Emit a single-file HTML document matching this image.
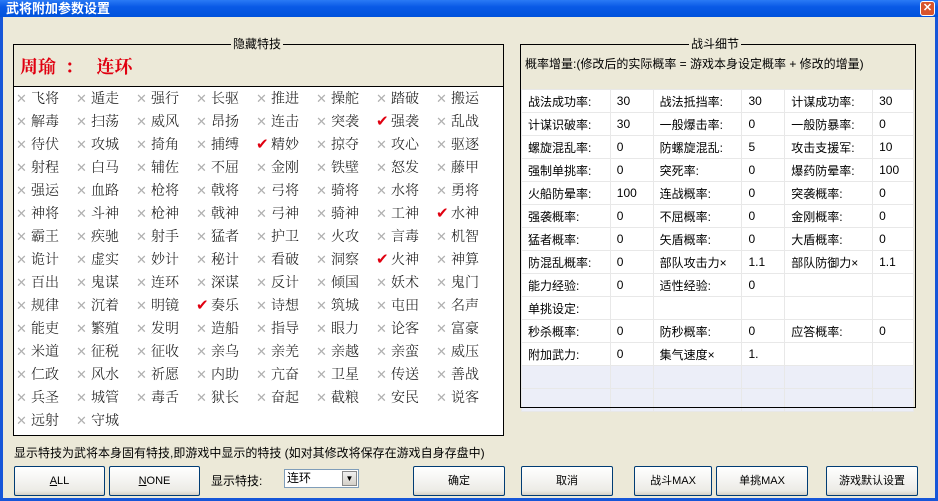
<!DOCTYPE html>
<html><head><meta charset="utf-8"><style>
*{margin:0;padding:0;box-sizing:border-box}
body{width:938px;height:501px;overflow:hidden;background:#ece9d8;font-family:"Liberation Sans","Noto Sans CJK SC",sans-serif;font-size:12px;color:#000;position:relative}
.title{position:absolute;left:0;top:0;width:938px;height:17px;background:linear-gradient(#2a7af5,#0a5ae6 40%,#0052dc);color:#fff;font-weight:bold;font-size:13px;line-height:17px;padding-left:6px}
.close{position:absolute;right:3px;top:1px;width:15px;height:15px;background:#d8542c;border:1px solid #fff;border-radius:3px;color:#fff;font-size:11px;line-height:13px;text-align:center;font-weight:bold}
.bl{position:absolute;left:0;top:17px;width:3px;height:484px;background:#1656d8}
.br{position:absolute;right:0;top:17px;width:3px;height:484px;background:#1656d8}
.bb{position:absolute;left:0;bottom:0;width:938px;height:3px;background:#1656d8}
.box{position:absolute;border:1px solid #000;z-index:2}
.cap{position:absolute;background:#ece9d8;padding:0 2px;font-size:12px;line-height:14px;z-index:3}
.grid{position:absolute;left:14px;top:86px;width:489px;height:349px;background:#fff;border-top:1px solid #000}
.it{position:absolute;width:60px;height:23px;font-family:"Noto Serif CJK SC",serif;font-weight:300;font-size:14px;line-height:23px;white-space:nowrap;color:#111}
.x{display:inline-block;width:15px;color:#b0b0b0;font-family:"DejaVu Sans",sans-serif;font-size:13px;font-weight:bold}
.c{display:inline-block;width:15px;color:#e00010;font-family:"DejaVu Sans",sans-serif;font-size:15px}
table{position:absolute;left:521px;top:89px;width:393px;border-collapse:collapse;background:#fff}
td{height:23px;border:1px solid #e8e8e8;padding-left:6px;font-size:12px;white-space:nowrap}
tr.e td{background:#eceef8}
.btn{position:absolute;top:466px;height:30px;border:1px solid #003c74;border-radius:2px;background:linear-gradient(#fff,#ecebe6 85%,#d6d0c5);font-size:11px;text-align:center;line-height:28px}
</style></head><body>
<div class="title">武将附加参数设置</div><div class="close">✕</div>
<div class="bl"></div><div class="br"></div><div class="bb"></div>

<div class="box" style="left:13px;top:44px;width:491px;height:392px"></div>
<div class="cap" style="left:231px;top:37px">隐藏特技</div>
<div style="position:absolute;left:20px;top:54px;color:#e00010;font-family:'Noto Serif CJK SC',serif;font-weight:bold;font-size:18px;line-height:24px">周瑜&nbsp;&nbsp;：&nbsp;&nbsp;&nbsp;连环</div>
<div class="grid">
<div class="it" style="left:2px;top:0px"><span class="x">✕</span>飞将</div><div class="it" style="left:62px;top:0px"><span class="x">✕</span>遁走</div><div class="it" style="left:122px;top:0px"><span class="x">✕</span>强行</div><div class="it" style="left:182px;top:0px"><span class="x">✕</span>长驱</div><div class="it" style="left:242px;top:0px"><span class="x">✕</span>推进</div><div class="it" style="left:302px;top:0px"><span class="x">✕</span>操舵</div><div class="it" style="left:362px;top:0px"><span class="x">✕</span>踏破</div><div class="it" style="left:422px;top:0px"><span class="x">✕</span>搬运</div>
<div class="it" style="left:2px;top:23px"><span class="x">✕</span>解毒</div><div class="it" style="left:62px;top:23px"><span class="x">✕</span>扫荡</div><div class="it" style="left:122px;top:23px"><span class="x">✕</span>威风</div><div class="it" style="left:182px;top:23px"><span class="x">✕</span>昂扬</div><div class="it" style="left:242px;top:23px"><span class="x">✕</span>连击</div><div class="it" style="left:302px;top:23px"><span class="x">✕</span>突袭</div><div class="it" style="left:362px;top:23px"><span class="c">✔</span>强袭</div><div class="it" style="left:422px;top:23px"><span class="x">✕</span>乱战</div>
<div class="it" style="left:2px;top:46px"><span class="x">✕</span>待伏</div><div class="it" style="left:62px;top:46px"><span class="x">✕</span>攻城</div><div class="it" style="left:122px;top:46px"><span class="x">✕</span>掎角</div><div class="it" style="left:182px;top:46px"><span class="x">✕</span>捕缚</div><div class="it" style="left:242px;top:46px"><span class="c">✔</span>精妙</div><div class="it" style="left:302px;top:46px"><span class="x">✕</span>掠夺</div><div class="it" style="left:362px;top:46px"><span class="x">✕</span>攻心</div><div class="it" style="left:422px;top:46px"><span class="x">✕</span>驱逐</div>
<div class="it" style="left:2px;top:69px"><span class="x">✕</span>射程</div><div class="it" style="left:62px;top:69px"><span class="x">✕</span>白马</div><div class="it" style="left:122px;top:69px"><span class="x">✕</span>辅佐</div><div class="it" style="left:182px;top:69px"><span class="x">✕</span>不屈</div><div class="it" style="left:242px;top:69px"><span class="x">✕</span>金刚</div><div class="it" style="left:302px;top:69px"><span class="x">✕</span>铁壁</div><div class="it" style="left:362px;top:69px"><span class="x">✕</span>怒发</div><div class="it" style="left:422px;top:69px"><span class="x">✕</span>藤甲</div>
<div class="it" style="left:2px;top:92px"><span class="x">✕</span>强运</div><div class="it" style="left:62px;top:92px"><span class="x">✕</span>血路</div><div class="it" style="left:122px;top:92px"><span class="x">✕</span>枪将</div><div class="it" style="left:182px;top:92px"><span class="x">✕</span>戟将</div><div class="it" style="left:242px;top:92px"><span class="x">✕</span>弓将</div><div class="it" style="left:302px;top:92px"><span class="x">✕</span>骑将</div><div class="it" style="left:362px;top:92px"><span class="x">✕</span>水将</div><div class="it" style="left:422px;top:92px"><span class="x">✕</span>勇将</div>
<div class="it" style="left:2px;top:115px"><span class="x">✕</span>神将</div><div class="it" style="left:62px;top:115px"><span class="x">✕</span>斗神</div><div class="it" style="left:122px;top:115px"><span class="x">✕</span>枪神</div><div class="it" style="left:182px;top:115px"><span class="x">✕</span>戟神</div><div class="it" style="left:242px;top:115px"><span class="x">✕</span>弓神</div><div class="it" style="left:302px;top:115px"><span class="x">✕</span>骑神</div><div class="it" style="left:362px;top:115px"><span class="x">✕</span>工神</div><div class="it" style="left:422px;top:115px"><span class="c">✔</span>水神</div>
<div class="it" style="left:2px;top:138px"><span class="x">✕</span>霸王</div><div class="it" style="left:62px;top:138px"><span class="x">✕</span>疾驰</div><div class="it" style="left:122px;top:138px"><span class="x">✕</span>射手</div><div class="it" style="left:182px;top:138px"><span class="x">✕</span>猛者</div><div class="it" style="left:242px;top:138px"><span class="x">✕</span>护卫</div><div class="it" style="left:302px;top:138px"><span class="x">✕</span>火攻</div><div class="it" style="left:362px;top:138px"><span class="x">✕</span>言毒</div><div class="it" style="left:422px;top:138px"><span class="x">✕</span>机智</div>
<div class="it" style="left:2px;top:161px"><span class="x">✕</span>诡计</div><div class="it" style="left:62px;top:161px"><span class="x">✕</span>虚实</div><div class="it" style="left:122px;top:161px"><span class="x">✕</span>妙计</div><div class="it" style="left:182px;top:161px"><span class="x">✕</span>秘计</div><div class="it" style="left:242px;top:161px"><span class="x">✕</span>看破</div><div class="it" style="left:302px;top:161px"><span class="x">✕</span>洞察</div><div class="it" style="left:362px;top:161px"><span class="c">✔</span>火神</div><div class="it" style="left:422px;top:161px"><span class="x">✕</span>神算</div>
<div class="it" style="left:2px;top:184px"><span class="x">✕</span>百出</div><div class="it" style="left:62px;top:184px"><span class="x">✕</span>鬼谋</div><div class="it" style="left:122px;top:184px"><span class="x">✕</span>连环</div><div class="it" style="left:182px;top:184px"><span class="x">✕</span>深谋</div><div class="it" style="left:242px;top:184px"><span class="x">✕</span>反计</div><div class="it" style="left:302px;top:184px"><span class="x">✕</span>倾国</div><div class="it" style="left:362px;top:184px"><span class="x">✕</span>妖术</div><div class="it" style="left:422px;top:184px"><span class="x">✕</span>鬼门</div>
<div class="it" style="left:2px;top:207px"><span class="x">✕</span>规律</div><div class="it" style="left:62px;top:207px"><span class="x">✕</span>沉着</div><div class="it" style="left:122px;top:207px"><span class="x">✕</span>明镜</div><div class="it" style="left:182px;top:207px"><span class="c">✔</span>奏乐</div><div class="it" style="left:242px;top:207px"><span class="x">✕</span>诗想</div><div class="it" style="left:302px;top:207px"><span class="x">✕</span>筑城</div><div class="it" style="left:362px;top:207px"><span class="x">✕</span>屯田</div><div class="it" style="left:422px;top:207px"><span class="x">✕</span>名声</div>
<div class="it" style="left:2px;top:230px"><span class="x">✕</span>能吏</div><div class="it" style="left:62px;top:230px"><span class="x">✕</span>繁殖</div><div class="it" style="left:122px;top:230px"><span class="x">✕</span>发明</div><div class="it" style="left:182px;top:230px"><span class="x">✕</span>造船</div><div class="it" style="left:242px;top:230px"><span class="x">✕</span>指导</div><div class="it" style="left:302px;top:230px"><span class="x">✕</span>眼力</div><div class="it" style="left:362px;top:230px"><span class="x">✕</span>论客</div><div class="it" style="left:422px;top:230px"><span class="x">✕</span>富豪</div>
<div class="it" style="left:2px;top:253px"><span class="x">✕</span>米道</div><div class="it" style="left:62px;top:253px"><span class="x">✕</span>征税</div><div class="it" style="left:122px;top:253px"><span class="x">✕</span>征收</div><div class="it" style="left:182px;top:253px"><span class="x">✕</span>亲乌</div><div class="it" style="left:242px;top:253px"><span class="x">✕</span>亲羌</div><div class="it" style="left:302px;top:253px"><span class="x">✕</span>亲越</div><div class="it" style="left:362px;top:253px"><span class="x">✕</span>亲蛮</div><div class="it" style="left:422px;top:253px"><span class="x">✕</span>威压</div>
<div class="it" style="left:2px;top:276px"><span class="x">✕</span>仁政</div><div class="it" style="left:62px;top:276px"><span class="x">✕</span>风水</div><div class="it" style="left:122px;top:276px"><span class="x">✕</span>祈愿</div><div class="it" style="left:182px;top:276px"><span class="x">✕</span>内助</div><div class="it" style="left:242px;top:276px"><span class="x">✕</span>亢奋</div><div class="it" style="left:302px;top:276px"><span class="x">✕</span>卫星</div><div class="it" style="left:362px;top:276px"><span class="x">✕</span>传送</div><div class="it" style="left:422px;top:276px"><span class="x">✕</span>善战</div>
<div class="it" style="left:2px;top:299px"><span class="x">✕</span>兵圣</div><div class="it" style="left:62px;top:299px"><span class="x">✕</span>城管</div><div class="it" style="left:122px;top:299px"><span class="x">✕</span>毒舌</div><div class="it" style="left:182px;top:299px"><span class="x">✕</span>狱长</div><div class="it" style="left:242px;top:299px"><span class="x">✕</span>奋起</div><div class="it" style="left:302px;top:299px"><span class="x">✕</span>截粮</div><div class="it" style="left:362px;top:299px"><span class="x">✕</span>安民</div><div class="it" style="left:422px;top:299px"><span class="x">✕</span>说客</div>
<div class="it" style="left:2px;top:322px"><span class="x">✕</span>远射</div><div class="it" style="left:62px;top:322px"><span class="x">✕</span>守城</div>
</div>

<div class="box" style="left:520px;top:44px;width:396px;height:364px"></div>
<div class="cap" style="left:689px;top:37px">战斗细节</div>
<div style="position:absolute;left:525px;top:57px;font-size:12px;line-height:14px">概率增量:(修改后的实际概率 = 游戏本身设定概率 + 修改的增量)</div>
<table>
<colgroup><col style="width:89px"><col style="width:43px"><col style="width:89px"><col style="width:43px"><col style="width:88px"><col style="width:41px"></colgroup>
<tr><td>战法成功率:</td><td>30</td><td>战法抵挡率:</td><td>30</td><td>计谋成功率:</td><td>30</td></tr>
<tr><td>计谋识破率:</td><td>30</td><td>一般爆击率:</td><td>0</td><td>一般防暴率:</td><td>0</td></tr>
<tr><td>螺旋混乱率:</td><td>0</td><td>防螺旋混乱:</td><td>5</td><td>攻击支援军:</td><td>10</td></tr>
<tr><td>强制单挑率:</td><td>0</td><td>突死率:</td><td>0</td><td>爆药防晕率:</td><td>100</td></tr>
<tr><td>火船防晕率:</td><td>100</td><td>连战概率:</td><td>0</td><td>突袭概率:</td><td>0</td></tr>
<tr><td>强袭概率:</td><td>0</td><td>不屈概率:</td><td>0</td><td>金刚概率:</td><td>0</td></tr>
<tr><td>猛者概率:</td><td>0</td><td>矢盾概率:</td><td>0</td><td>大盾概率:</td><td>0</td></tr>
<tr><td>防混乱概率:</td><td>0</td><td>部队攻击力×</td><td>1.1</td><td>部队防御力×</td><td>1.1</td></tr>
<tr><td>能力经验:</td><td>0</td><td>适性经验:</td><td>0</td><td></td><td></td></tr>
<tr><td>单挑设定:</td><td></td><td></td><td></td><td></td><td></td></tr>
<tr><td>秒杀概率:</td><td>0</td><td>防秒概率:</td><td>0</td><td>应答概率:</td><td>0</td></tr>
<tr><td>附加武力:</td><td>0</td><td>集气速度×</td><td>1.</td><td></td><td></td></tr>
<tr class="e"><td></td><td></td><td></td><td></td><td></td><td></td></tr>
<tr class="e"><td style="height:16px"></td><td></td><td></td><td></td><td></td><td></td></tr>
</table>

<div style="position:absolute;left:14px;top:446px;font-size:12px;line-height:14px">显示特技为武将本身固有特技,即游戏中显示的特技 (如对其修改将保存在游戏自身存盘中)</div>
<div class="btn" style="left:14px;width:91px"><u>A</u>LL</div>
<div class="btn" style="left:109px;width:91px"><u>N</u>ONE</div>
<div style="position:absolute;left:211px;top:472px;font-size:12px">显示特技:</div>
<div style="position:absolute;left:284px;top:469px;width:75px;height:19px;background:#fff;border:1px solid #7f9db9;font-size:12px;line-height:17px;padding-left:2px">连环<div style="position:absolute;right:1px;top:1px;width:15px;height:15px;background:linear-gradient(#f0f0f0,#d4d0c8);border:1px solid #888;font-size:8px;line-height:13px;text-align:center">▼</div></div>
<div class="btn" style="left:413px;width:92px">确定</div>
<div class="btn" style="left:521px;width:92px">取消</div>
<div class="btn" style="left:634px;width:78px">战斗MAX</div>
<div class="btn" style="left:716px;width:92px">单挑MAX</div>
<div class="btn" style="left:826px;width:92px">游戏默认设置</div>
</body></html>
